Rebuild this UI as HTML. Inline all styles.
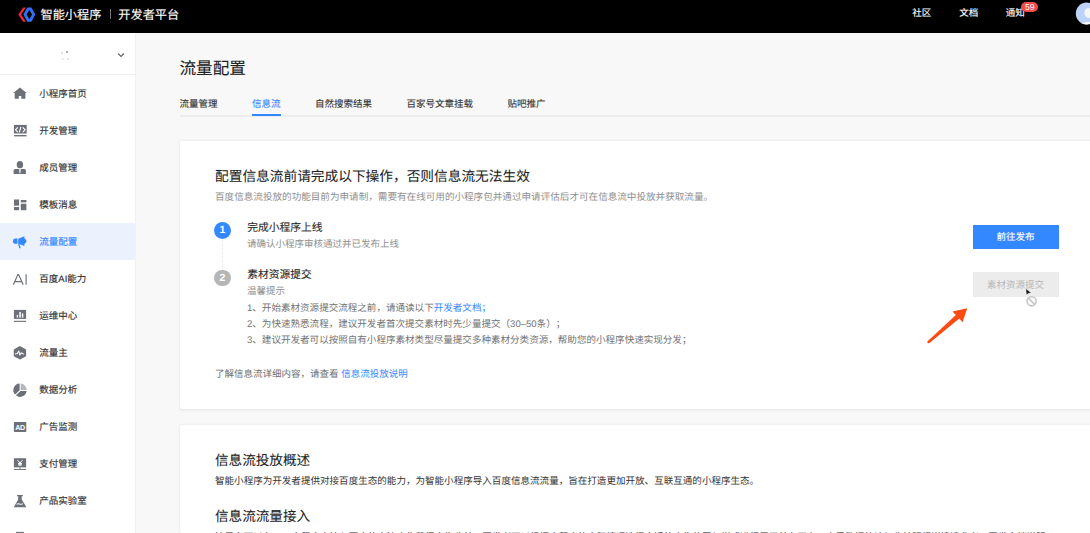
<!DOCTYPE html>
<html lang="zh-CN"><head><meta charset="utf-8">
<style>
*{margin:0;padding:0;box-sizing:border-box}
html,body{text-rendering:geometricPrecision;text-spacing-trim:space-all;width:1090px;height:533px;overflow:hidden;background:#f8f8f8;font-family:"Liberation Sans",sans-serif;color:#333}
.abs{position:absolute;white-space:nowrap}
#hdr{position:absolute;left:0;top:0;width:1090px;height:33px;background:#000}
#side{position:absolute;left:0;top:33px;width:136px;height:500px;background:#fff;border-right:1px solid #f1f1f1}
.nav{position:absolute;left:0;width:135px;height:37px}
.nav .t{position:absolute;left:39.3px;top:0.6px;line-height:37px;font-size:9.5px;color:#333;-webkit-text-stroke:0.15px #333}
.nav svg{position:absolute;left:12px;top:11px}
.nav>div:first-child{position:absolute;left:12px;top:11px}
.nav.act{background:#ebf2fd}
.nav.act .t{color:#3388ff;-webkit-text-stroke:0.15px #3388ff}
.card{position:absolute;left:180px;width:914px;background:#fff;border-radius:2px;box-shadow:0 0.5px 3px rgba(0,0,0,0.09)}
.tab{position:absolute;top:96.7px;font-size:9.5px;line-height:16px;color:#333;-webkit-text-stroke:0.1px currentColor}
</style></head><body>
<div id="hdr">
  <svg class="abs" style="left:15px;top:4px" width="24" height="22" viewBox="15 4 24 22">
    <polygon points="23.2,7.5 25.9,7.5 21,14.6 25.9,21.8 23.2,21.8 18.3,14.6" fill="#f7253b"/>
    <path fill-rule="evenodd" fill="#2f72f8" d="M27.3,7.5 L31.4,7.5 L35.3,14.6 L31.4,21.8 L27.3,21.8 L23.4,14.6 Z M29.3,10.1 L26.6,14.6 L29.3,19.3 L32.1,14.6 Z"/>
  </svg>
  <div class="abs" style="left:40.5px;top:6.8px;font-size:12.2px;line-height:16px;color:#fff;-webkit-text-stroke:0.12px #fff">智能小程序</div>
  <div class="abs" style="left:110px;top:8.5px;width:1px;height:10.5px;background:#777"></div>
  <div class="abs" style="left:118.3px;top:6.8px;font-size:12.2px;line-height:16px;color:#fff;-webkit-text-stroke:0.12px #fff">开发者平台</div>
  <div class="abs" style="left:912.3px;top:6.2px;font-size:9.5px;line-height:16px;color:#fff;-webkit-text-stroke:0.12px #fff">社区</div>
  <div class="abs" style="left:959.3px;top:6.2px;font-size:9.5px;line-height:16px;color:#fff;-webkit-text-stroke:0.12px #fff">文档</div>
  <div class="abs" style="left:1005.8px;top:6.2px;font-size:9.5px;line-height:16px;color:#fff;-webkit-text-stroke:0.12px #fff">通知</div>
  <div class="abs" style="left:1021px;top:1.6px;width:17.4px;height:10.8px;border-radius:5.4px;background:#ef4b48;color:#fff;font-size:8.6px;line-height:11.2px;text-align:center">59</div>
  <svg class="abs" style="left:1074px;top:1px" width="16" height="26" viewBox="1074 1 16 26"><defs><clipPath id="av"><circle cx="1086.8" cy="13.5" r="11"/></clipPath></defs><circle cx="1086.8" cy="13.5" r="11" fill="#bdd2f7"/><g clip-path="url(#av)"><ellipse cx="1088.6" cy="13" rx="4.2" ry="5" fill="#f4f6f5"/><ellipse cx="1088" cy="27.5" rx="10" ry="5.5" fill="#f7f8fa"/></g></svg>
</div>
<div id="side">
  <svg class="abs" style="left:117px;top:19px" width="8" height="6" viewBox="0 0 8 6"><polyline points="1,1.5 4,4.5 7,1.5" fill="none" stroke="#666" stroke-width="1.2"/></svg>
  <div class="abs" style="left:0;top:41px;width:135px;height:1px;background:#eee"></div>
  <div class="abs" style="left:61px;top:18.5px;width:2px;height:2px;border-radius:1px;background:#d4d4d4"></div>
  <div class="abs" style="left:66px;top:17.5px;width:1.6px;height:2.4px;border-radius:1px;background:#999"></div>
  <div class="abs" style="left:61.5px;top:25px;width:2px;height:1.5px;background:#eee"></div>
  <div class="abs" style="left:66.5px;top:25px;width:2px;height:1.5px;background:#e8e8e8"></div>
</div>
<div class="nav" style="top:75px"><svg width="16" height="16" viewBox="0 0 16 16"><path d="M7.9 1.5 L1.3 7.1 H2.7 V12.8 H6.8 V9.9 H9.3 V12.8 H13.4 V7.1 H14.7 Z" fill="#6b7079"/></svg><div class="t">小程序首页</div></div>
<div class="nav" style="top:112px"><svg width="16" height="16" viewBox="0 0 16 16"><rect x="1.9" y="1.9" width="12.8" height="8.6" fill="#6b7079"/><path d="M5.8 4.4 L3.5 6.8 L5.8 9.1 M10.8 4.4 L13.1 6.8 L10.8 9.1 M8.9 3.8 L7.3 9.4" stroke="#fff" stroke-width="1.15" fill="none"/><rect x="2.1" y="12" width="12.4" height="1.4" fill="#6b7079"/></svg><div class="t">开发管理</div></div>
<div class="nav" style="top:149px"><svg width="16" height="16" viewBox="0 0 16 16"><ellipse cx="7.9" cy="4.7" rx="3.2" ry="3.6" fill="#6b7079"/><path d="M1.6 13.9 V10.6 Q1.6 9 3.4 9 H12.2 Q13.9 9 13.9 10.6 V13.9 Z" fill="#6b7079"/><path d="M7.1 9.3 H8.8 L8.4 13.2 H7.5 Z" fill="#fff"/></svg><div class="t">成员管理</div></div>
<div class="nav" style="top:186px"><svg width="16" height="16" viewBox="0 0 16 16"><rect x="2" y="2.5" width="5.1" height="6.2" fill="#6b7079"/><rect x="8.8" y="3" width="5.6" height="2.4" fill="#6b7079"/><rect x="2" y="10" width="5.1" height="3.2" fill="#6b7079"/><rect x="8.8" y="6.7" width="5.6" height="6.5" fill="#6b7079"/></svg><div class="t">模板消息</div></div>
<div class="nav act" style="top:223px"><svg width="16" height="16" viewBox="0 0 16 16"><path d="M3.5 4.6 H5.5 V9.8 H3.5 Q1 9.8 1 7.2 Q1 4.6 3.5 4.6 Z" fill="#3388ff"/><path d="M6.2 4.7 L12.4 2.3 V4.3 Q16.6 7.1 12.4 9.9 V11.9 L6.2 9.7 Z" fill="#3388ff"/><path d="M6.7 10 L8.1 14.2" stroke="#3388ff" stroke-width="1.3"/></svg><div class="t">流量配置</div></div>
<div class="nav" style="top:260px"><svg width="16" height="16" viewBox="0 0 16 16"><path d="M1.3 13.7 L5.9 3.5 H6.6 L11.2 13.7 M3.2 10.6 H9.4 M14.1 3.3 V13.7" stroke="#6b7079" stroke-width="1.15" fill="none"/></svg><div class="t">百度AI能力</div></div>
<div class="nav" style="top:297px"><svg width="16" height="16" viewBox="0 0 16 16"><rect x="1.9" y="1.9" width="12.2" height="9" fill="#6b7079"/><rect x="4.75" y="6.9" width="1.35" height="2.7" fill="#fff"/><rect x="7.3" y="3.9" width="1.5" height="5.7" fill="#fff"/><rect x="9.85" y="5.4" width="1.45" height="4.2" fill="#fff"/><rect x="1.9" y="12.8" width="12.2" height="1.1" fill="#6b7079"/></svg><div class="t">运维中心</div></div>
<div class="nav" style="top:334px"><svg width="16" height="16" viewBox="0 0 16 16"><path d="M7.9 1.1 L14.1 4.5 V11.3 L7.9 14.6 L1.75 11.3 V4.5 Z" fill="#6b7079"/><path d="M2.9 9 L5.3 8.6 L6.8 6 L7.75 10.1 L9.25 7.7 L11.9 9.4" stroke="#fff" stroke-width="1.05" fill="none" stroke-linejoin="round"/></svg><div class="t">流量主</div></div>
<div class="nav" style="top:371px"><svg width="16" height="16" viewBox="0 0 16 16"><path d="M7.6 1.5 V8.2 L3.2 12.6 A6.55 6.55 0 0 1 7.6 1.5 Z" fill="#6b7079"/><path d="M8.6 8.9 H14.6 A6.55 6.55 0 0 1 3.9 13.3 Z" fill="#6b7079"/><path d="M8.6 1.5 A6.55 6.55 0 0 1 14.6 7.9 H8.6 Z" fill="#6b7079" opacity="0.5"/></svg><div class="t">数据分析</div></div>
<div class="nav" style="top:408px"><svg width="16" height="16" viewBox="0 0 16 16"><rect x="1.9" y="3" width="12.4" height="10.1" rx="0.8" fill="#6b7079"/><text x="8.1" y="10.7" font-size="7.2" font-weight="bold" fill="#fff" text-anchor="middle" font-family="Liberation Sans" letter-spacing="-0.3">AD</text></svg><div class="t">广告监测</div></div>
<div class="nav" style="top:445px"><svg width="16" height="16" viewBox="0 0 16 16"><rect x="1.9" y="2.25" width="12.2" height="9.15" fill="#6b7079"/><path d="M5.6 4.2 L8 7 L10.4 4.2 M8 7 V10 M6 7.6 H10 M6 8.9 H10" stroke="#fff" stroke-width="1" fill="none"/><rect x="7.5" y="11.4" width="0.9" height="1.7" fill="#6b7079"/><rect x="1.9" y="13" width="12.2" height="0.95" fill="#6b7079"/></svg><div class="t">支付管理</div></div>
<div class="nav" style="top:482px"><svg width="16" height="16" viewBox="0 0 16 16"><path d="M5.1 1.9 H10.75 V3.2 H9.7 V6.4 L14.5 14.25 H1.75 L6.2 6.4 V3.2 H5.1 Z" fill="#6b7079"/><path d="M4.6 11.3 Q6 10.3 7.6 11 Q9.3 11.7 11 10.6" stroke="#fff" stroke-width="1.1" fill="none"/></svg><div class="t">产品实验室</div></div>
<div class="nav" style="top:519px"><svg width="16" height="16" viewBox="0 0 16 16"><rect x="4" y="1.9" width="7.9" height="1.1" fill="#6b7079"/></svg><div class="t">工具</div></div>

<div class="abs" style="left:179.5px;top:57.6px;font-size:16.6px;line-height:22px;color:#222;-webkit-text-stroke:0.1px #222">流量配置</div>
<div class="tab" style="left:179.5px">流量管理</div>
<div class="tab" style="left:252px;color:#3388ff">信息流</div>
<div class="tab" style="left:315px">自然搜索结果</div>
<div class="tab" style="left:406.5px">百家号文章挂载</div>
<div class="tab" style="left:507.5px">贴吧推广</div>
<div class="abs" style="left:180px;top:115px;width:910px;height:2px;background:#ededed"></div>
<div class="abs" style="left:252px;top:114px;width:28.5px;height:2px;background:#3388ff"></div>

<div class="card" style="top:141px;height:268px"></div>
<div class="card" style="top:425px;height:108px"></div>
<div class="abs" style="left:215px;top:168.2px;font-size:13.7px;line-height:18px;color:#222;-webkit-text-stroke:0.08px #222">配置信息流前请完成以下操作，否则信息流无法生效</div>
<div class="abs" style="left:215px;top:189.8px;font-size:9.58px;line-height:16px;color:#8e8e8e">百度信息流投放的功能目前为申请制，需要有在线可用的小程序包并通过申请评估后才可在信息流中投放并获取流量。</div>
<div class="abs" style="left:214px;top:222.4px;width:17px;height:16.8px;border-radius:50%;background:#3388ff;color:#fff;font-size:10.5px;line-height:17px;font-weight:bold;text-align:center">1</div>
<div class="abs" style="left:222px;top:240px;width:0;height:29px;border-left:1px dotted #e4e4e4"></div>
<div class="abs" style="left:214px;top:269.6px;width:17px;height:16.8px;border-radius:50%;background:#b5b5b5;color:#fff;font-size:10.5px;line-height:17px;font-weight:bold;text-align:center">2</div>
<div class="abs" style="left:247.3px;top:219.8px;font-size:10.75px;line-height:16px;color:#2a2a2a;-webkit-text-stroke:0.1px #2a2a2a">完成小程序上线</div>
<div class="abs" style="left:247px;top:236.5px;font-size:9.5px;line-height:16px;color:#8e8e8e">请确认小程序审核通过并已发布上线</div>
<div class="abs" style="left:247.3px;top:267.3px;font-size:10.75px;line-height:16px;color:#2a2a2a;-webkit-text-stroke:0.1px #2a2a2a">素材资源提交</div>
<div class="abs" style="left:247px;top:284.3px;font-size:9.5px;line-height:16px;color:#8e8e8e">温馨提示</div>
<div class="abs" style="left:247px;top:300.6px;font-size:9.56px;line-height:16px;color:#727272">1、开始素材资源提交流程之前，请通读以下<span style="color:#3388ff">开发者文档；</span></div>
<div class="abs" style="left:247px;top:316.6px;font-size:9.56px;line-height:16px;color:#727272">2、为快速熟悉流程，建议开发者首次提交素材时先少量提交（30–50条）；</div>
<div class="abs" style="left:247px;top:332.6px;font-size:9.56px;line-height:16px;color:#727272">3、建议开发者可以按照自有小程序素材类型尽量提交多种素材分类资源，帮助您的小程序快速实现分发；</div>
<div class="abs" style="left:215px;top:367px;font-size:9.5px;line-height:16px;color:#707070">了解信息流详细内容，请查看 <span style="color:#3388ff">信息流投放说明</span></div>
<div class="abs" style="left:972.5px;top:225.2px;width:86px;height:24.2px;background:#3388ff;color:#fff;font-size:9.5px;line-height:26px;text-align:center;-webkit-text-stroke:0.12px #fff">前往发布</div>
<div class="abs" style="left:972.5px;top:272px;width:86px;height:24.6px;background:#ececec;color:#b8b8b8;font-size:9.5px;line-height:27px;text-align:center">素材资源提交</div>
<svg class="abs" style="left:918px;top:300px" width="60" height="50" viewBox="0 0 60 50">
  <path d="M49.2 8.2 L34.5 11.4 L37.9 14.9 L9.3 41.4 Q9.3 43.6 11.2 43.2 L41.3 18.4 L44.6 22.2 Z" fill="#fb4a14"/>
</svg>
<svg class="abs" style="left:1020px;top:285px" width="22" height="24" viewBox="0 0 22 24">
  <circle cx="11.6" cy="16.3" r="4.6" fill="#fafafa" stroke="#c6c6c6" stroke-width="1.6"/>
  <path d="M8.4 13.1 L14.8 19.5" stroke="#c6c6c6" stroke-width="1.6"/>
  <path d="M5.8 3.6 L11.4 7.9 L8.6 8.3 L6.4 10 Z" fill="#111" stroke="#fff" stroke-width="0.5"/>
</svg>
<div class="abs" style="left:215px;top:451.8px;font-size:13.6px;line-height:18px;color:#222;-webkit-text-stroke:0.08px #222">信息流投放概述</div>
<div class="abs" style="left:215px;top:473.5px;font-size:9.56px;line-height:16px;color:#333">智能小程序为开发者提供对接百度生态的能力，为智能小程序导入百度信息流流量，旨在打造更加开放、互联互通的小程序生态。</div>
<div class="abs" style="left:215px;top:507.8px;font-size:13.6px;line-height:18px;color:#222;-webkit-text-stroke:0.08px #222">信息流流量接入</div>
<div class="abs" style="left:215px;top:529.5px;font-size:9.56px;line-height:16px;color:#333">流量主可以在，　小程序中接入百度信息流广告获得广告收益，开发者可以根据小程序的实际情况选择合适的广告位置与样式进行展示并在平台，查看数据统计与收益明细详情请参考，开发文档说明</div>

</body></html>
